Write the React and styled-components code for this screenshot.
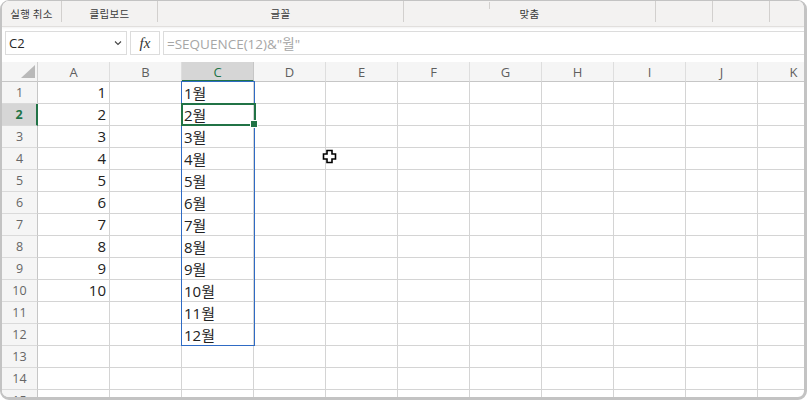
import React from 'react'
import styled, { createGlobalStyle } from 'styled-components'

const GlobalStyle = createGlobalStyle`
  body {
    margin: 0;
    background: #ffffff;
    font-family: "Noto Sans", "Noto Sans CJK KR", sans-serif;
  }
`

const Frame = styled.div`
  width: 807px;
  height: 400px;
  box-sizing: border-box;
  border: 2px solid #c3c3c3;
  border-top-width: 1px;
  border-right-width: 3px;
  border-bottom-width: 3px;
  border-radius: 9px;
  overflow: hidden;
  display: flex;
  flex-direction: column;
  background: #ffffff;
`

const Ribbon = styled.div`
  height: 25px;
  flex: none;
  display: flex;
  background: #f3f2f1;
  border-bottom: 1px solid #e1dfdd;
  box-shadow: 0 1px 2px rgba(0, 0, 0, 0.06);
  position: relative;
`

const Group = styled.div`
  width: ${(p) => p.w}px;
  flex: none;
  height: 21px;
  box-sizing: border-box;
  border-right: ${(p) => (p.last ? 'none' : '1px solid #d2d0ce')};
  display: flex;
  align-items: flex-end;
  justify-content: center;
  padding-bottom: 1px;
  font-family: "Noto Sans CJK KR", sans-serif;
  font-size: 10.5px;
  line-height: 14px;
  color: #3b3b3b;
  letter-spacing: 0.3px;
`

const Tick = styled.div`
  position: absolute;
  left: 487px;
  top: 1px;
  width: 1px;
  height: 7px;
  background: #d2d0ce;
`

const FormulaBar = styled.div`
  height: 35px;
  flex: none;
  box-sizing: border-box;
  padding: 4px 0 7px 3px;
  display: flex;
  gap: 3px;
`

const Box = styled.div`
  height: 24px;
  box-sizing: border-box;
  border: 1px solid #dcdcdc;
  background: #ffffff;
  display: flex;
  align-items: center;
  font-family: "Open Sans", "Noto Sans CJK KR", sans-serif;
`

const NameBox = styled(Box)`
  width: 122px;
  flex: none;
  padding: 0 4px 0 3px;
  justify-content: space-between;
  font-size: 13px;
  color: #262626;
`

const FxBox = styled(Box)`
  width: 30px;
  flex: none;
  justify-content: center;
  font-family: "Liberation Serif", serif;
  font-style: italic;
  font-size: 15px;
  color: #333333;
`

const FormulaInput = styled(Box)`
  flex: 1;
  padding-left: 3px;
  border-right: none;
  font-size: 13.5px;
  color: #a6a6a6;
`

const GridWrap = styled.div`
  position: relative;
  flex: 1;
  overflow: hidden;
`

const Grid = styled.div`
  display: grid;
  grid-template-columns: 36px repeat(11, 72px);
  grid-template-rows: 20px;
  grid-auto-rows: 22px;
`

const Corner = styled.div`
  background: #f5f5f5;
  box-sizing: border-box;
  border-right: 1px solid #d0d0d0;
  border-bottom: 1px solid #c6c6c6;
  display: flex;
  align-items: flex-end;
  justify-content: flex-end;
  padding: 0 2px 3px 0;
`

const ColHead = styled.div`
  box-sizing: border-box;
  background: ${(p) => (p.active ? '#d6d6d6' : '#f5f5f5')};
  border-right: 1px solid ${(p) => (p.active ? '#c6c6c6' : '#dedede')};
  border-bottom: ${(p) => (p.active ? '2px solid #217346' : '1px solid #c6c6c6')};
  display: flex;
  align-items: center;
  justify-content: center;
  font-family: "Open Sans", sans-serif;
  font-size: 13px;
  color: ${(p) => (p.active ? '#217346' : '#5f5f5f')};
  padding-top: ${(p) => (p.active ? '1px' : '0')};
`

const RowHead = styled.div`
  box-sizing: border-box;
  background: ${(p) => (p.active ? '#d6d6d6' : '#f5f5f5')};
  border-right: ${(p) => (p.active ? '2px solid #217346' : '1px solid #c6c6c6')};
  border-bottom: 1px solid #dadada;
  display: flex;
  align-items: center;
  justify-content: center;
  font-family: "Open Sans", sans-serif;
  font-size: 12.5px;
  font-weight: ${(p) => (p.active ? 700 : 400)};
  color: ${(p) => (p.active ? '#217346' : '#666666')};
`

const Cell = styled.div`
  box-sizing: border-box;
  border-right: 1px solid #d4d4d4;
  border-bottom: 1px solid #d4d4d4;
  display: flex;
  align-items: center;
  justify-content: ${(p) => (p.right ? 'flex-end' : 'flex-start')};
  padding: 0 3px 1px 2px;
  font-family: "Open Sans", "Noto Sans CJK KR", sans-serif;
  font-size: 15px;
  color: #222222;
  white-space: nowrap;
`

const RangeBox = styled.div`
  position: absolute;
  left: 179px;
  top: 19px;
  width: 74px;
  height: 265px;
  box-sizing: border-box;
  border: 1px solid #2f6bc4;
  pointer-events: none;
`

const ActiveCell = styled.div`
  position: absolute;
  left: 179px;
  top: 41px;
  width: 75px;
  height: 23px;
  box-sizing: border-box;
  border: 2px solid #217346;
  pointer-events: none;
`

const FillHandle = styled.div`
  position: absolute;
  right: -4px;
  bottom: -4px;
  width: 6px;
  height: 6px;
  background: #217346;
  border: 1px solid #ffffff;
`

const Cursor = styled.svg`
  position: absolute;
  left: 320px;
  top: 87px;
`

const cols = ['A', 'B', 'C', 'D', 'E', 'F', 'G', 'H', 'I', 'J', 'K']
const rows = Array.from({ length: 15 }, (_, i) => i + 1)

function cellValue(r, c) {
  if (c === 'A' && r <= 10) return r
  if (c === 'C' && r <= 12) return `${r}월`
  return ''
}

export default function App() {
  return (
    <>
      <GlobalStyle />
      <Frame>
        <Ribbon>
          <Group w={60}>실행 취소</Group>
          <Group w={96}>클립보드</Group>
          <Group w={246}>글꼴</Group>
          <Group w={252}>맞춤</Group>
          <Group w={57} />
          <Group w={57} />
          <Group w={60} last />
          <Tick />
        </Ribbon>
        <FormulaBar>
          <NameBox>
            <span>C2</span>
            <svg width="8" height="6" viewBox="0 0 8 6">
              <path d="M1 1.5 L4 4.5 L7 1.5" fill="none" stroke="#444" strokeWidth="1.1" />
            </svg>
          </NameBox>
          <FxBox>fx</FxBox>
          <FormulaInput>=SEQUENCE(12)&amp;"월"</FormulaInput>
        </FormulaBar>
        <GridWrap>
          <Grid>
            <Corner>
              <svg width="14" height="13" viewBox="0 0 14 13">
                <path d="M14 0 L14 13 L0 13 Z" fill="#b9b9b9" />
              </svg>
            </Corner>
            {cols.map((c) => (
              <ColHead key={c} active={c === 'C'}>
                {c}
              </ColHead>
            ))}
            {rows.map((r) => (
              <React.Fragment key={r}>
                <RowHead active={r === 2}>{r}</RowHead>
                {cols.map((c) => (
                  <Cell key={c} right={c === 'A'}>
                    {cellValue(r, c)}
                  </Cell>
                ))}
              </React.Fragment>
            ))}
          </Grid>
          <RangeBox />
          <ActiveCell>
            <FillHandle />
          </ActiveCell>
          <Cursor width="15" height="15" viewBox="0 0 15 15">
            <path
              d="M5 1.5 H10 V5 H13.5 V10 H10 V13.5 H5 V10 H1.5 V5 H5 Z"
              fill="#ffffff"
              stroke="#000000"
              strokeWidth="1.6"
            />
          </Cursor>
        </GridWrap>
      </Frame>
    </>
  )
}
